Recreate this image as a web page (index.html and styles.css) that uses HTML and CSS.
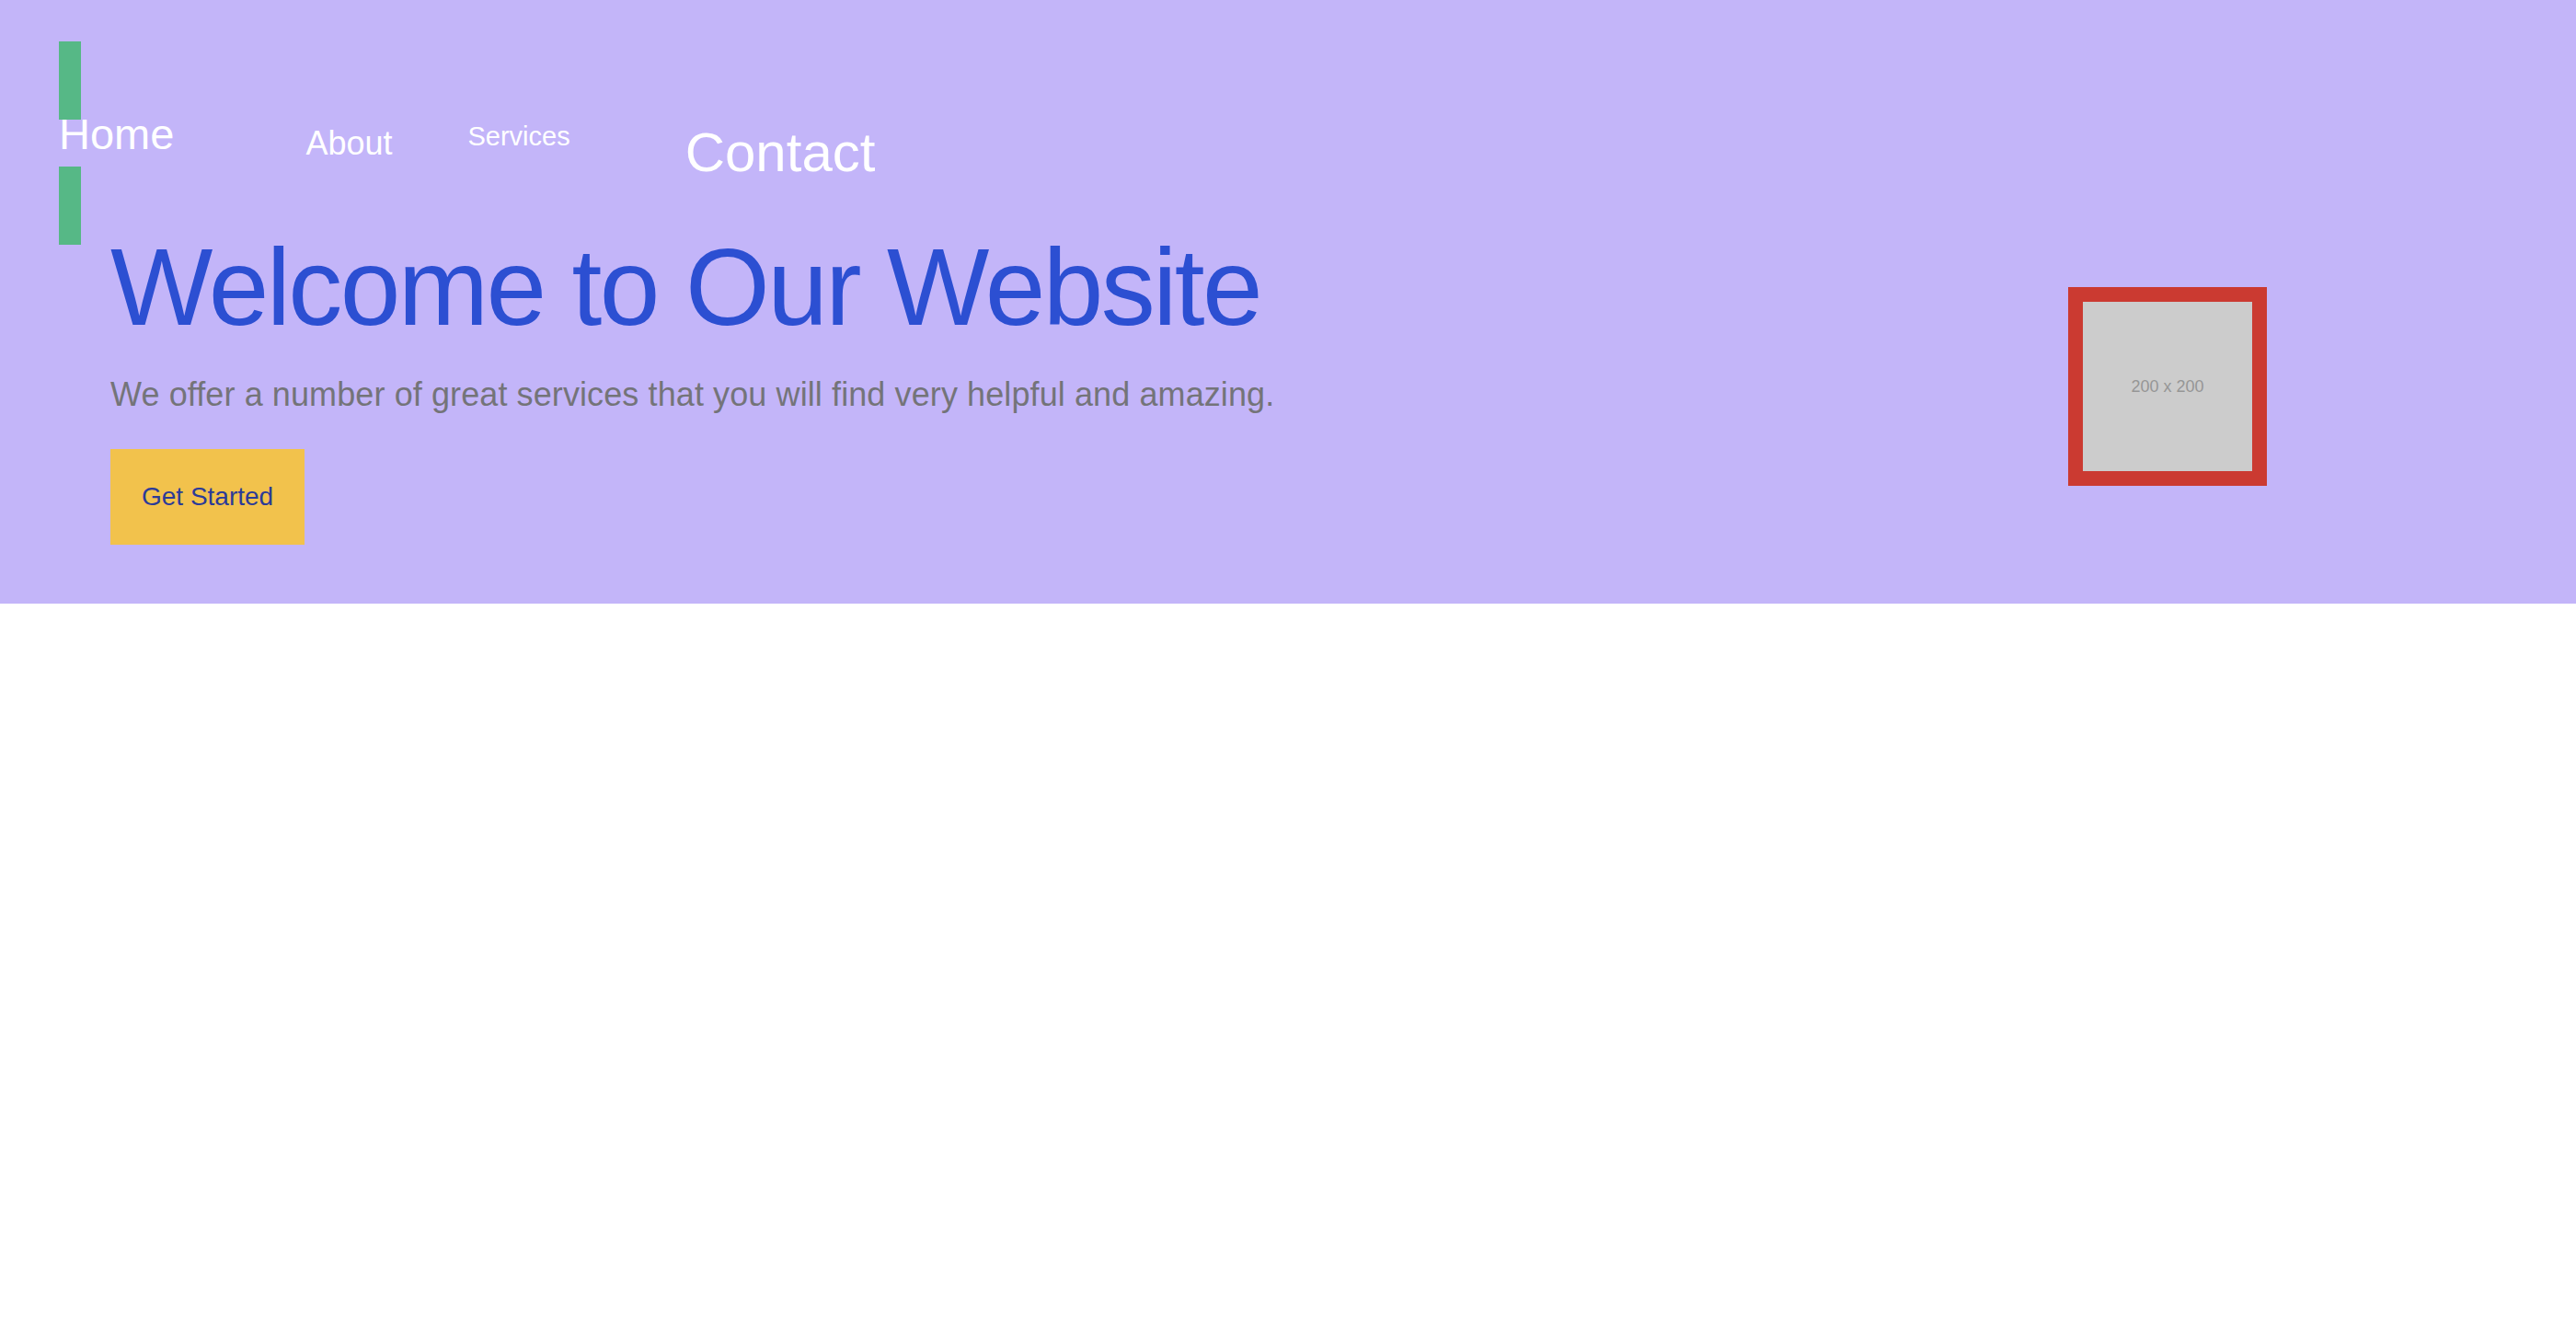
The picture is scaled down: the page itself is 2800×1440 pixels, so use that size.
FILE: index.html
```html
<!DOCTYPE html>
<html lang="en">
<head>
<meta charset="utf-8">
<title>Welcome</title>
<link rel="stylesheet" href="styles.css">
</head>
<body>
<section class="hero">
  <nav class="nav">
    <a class="nav-link nav-home" href="#">
      <span class="nav-bar"></span>
      <span class="nav-home-text">Home</span>
      <span class="nav-bar"></span>
    </a>
    <a class="nav-link nav-about" href="#">About</a>
    <a class="nav-link nav-services" href="#">Services</a>
    <a class="nav-link nav-contact" href="#">Contact</a>
  </nav>
  <div class="hero-content">
    <div class="hero-text">
      <h1 class="hero-title">Welcome to Our Website</h1>
      <p class="hero-sub">We offer a number of great services that you will find very helpful and amazing.</p>
      <a class="hero-btn" href="#">Get Started</a>
    </div>
    <div class="hero-image"><span class="hero-image-label">200 x 200</span></div>
  </div>
</section>
</body>
</html>
```
FILE: styles.css
```css
* { box-sizing: border-box; }
html, body { margin: 0; padding: 0; background: #ffffff; }
body { font-family: "Liberation Sans", Arial, sans-serif; }

.hero {
  background: #c3b5f9;
  padding: 45px 0 64px 0;
  height: 656px;
}

.nav {
  display: flex;
  align-items: flex-start;
  height: 208px;
  padding-left: 64px;
}
.nav-link { color: #ffffff; text-decoration: none; display: block; }

.nav-home { display: flex; flex-direction: column; align-items: flex-start; }
.nav-bar { display: block; width: 24px; height: 85px; background: #56b886; }
.nav-home-text { font-size: 47px; line-height: 32px; margin-bottom: 19px; }

.nav-about { font-size: 36px; line-height: 36px; margin: 93px 0 0 143px; }
.nav-services { font-size: 29px; line-height: 30px; margin: 88px 0 0 82px; }
.nav-contact { font-size: 60px; line-height: 60px; margin: 91px 0 0 125px; }

.hero-content {
  display: flex;
  justify-content: space-between;
  align-items: center;
  padding: 0 336px 0 120px;
}
.hero-text { display: flex; flex-direction: column; align-items: flex-start; }
.hero-title {
  margin: 0;
  font-size: 118px;
  line-height: 118px;
  font-weight: 400;
  letter-spacing: -2.6px;
  color: #2c4fd2;
}
.hero-sub {
  margin: 36px 0 0 0;
  font-size: 36px;
  line-height: 44px;
  letter-spacing: 0.1px;
  color: #747479;
}
.hero-btn {
  margin-top: 37px;
  display: block;
  background: #f2c24c;
  color: #2c3b98;
  text-decoration: none;
  font-size: 28px;
  line-height: 34px;
  padding: 35px 34px;
}

.hero-image {
  width: 216px;
  height: 216px;
  border: 16px solid #cb3a31;
  background: #cccccc;
  display: flex;
  align-items: center;
  justify-content: center;
  margin-bottom: 5px;
}
.hero-image-label { font-size: 18px; color: #969696; }
```
